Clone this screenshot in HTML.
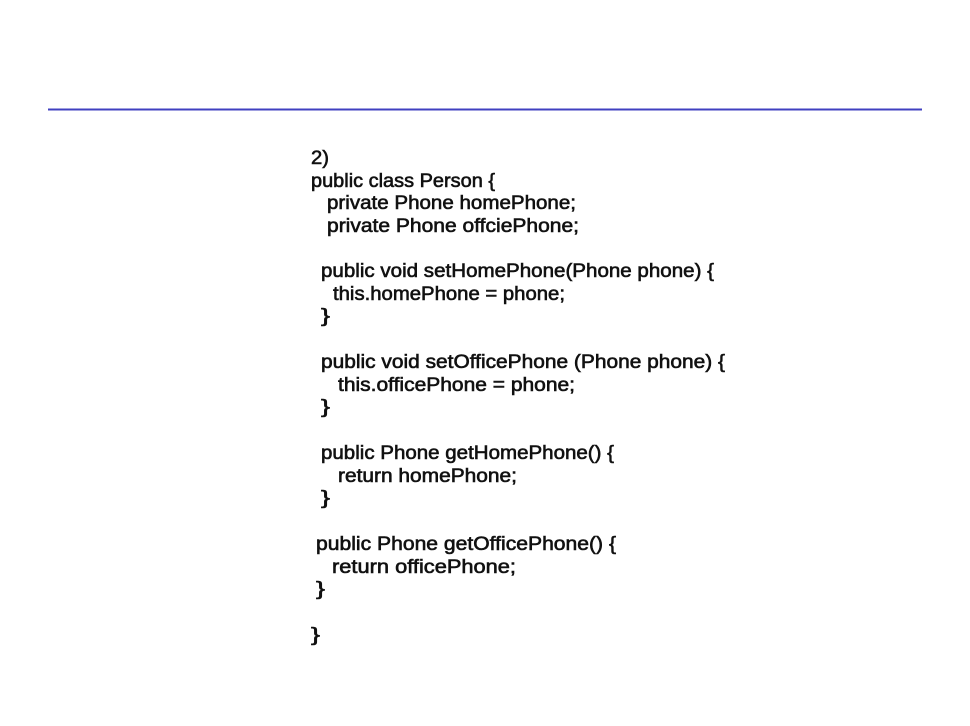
<!DOCTYPE html>
<html><head><meta charset="utf-8"><style>
html,body{margin:0;padding:0;background:#fff;width:970px;height:726px;overflow:hidden}
svg{display:block}
text{font-family:"Liberation Sans","NanumGothic",sans-serif;font-size:19px;fill:#111;stroke:#111;stroke-width:0.6}
</style></head><body>
<svg width="970" height="726" viewBox="0 0 970 726">
<rect x="48" y="108.5" width="874" height="2" fill="#4040c0"/>
<text x="311" y="164" textLength="18" lengthAdjust="spacingAndGlyphs">2)</text>
<text x="311" y="187" textLength="184" lengthAdjust="spacingAndGlyphs">public class Person {</text>
<text x="327" y="209" textLength="249" lengthAdjust="spacingAndGlyphs">private Phone homePhone;</text>
<text x="327" y="232" textLength="252" lengthAdjust="spacingAndGlyphs">private Phone offciePhone;</text>
<text x="321" y="277" textLength="393" lengthAdjust="spacingAndGlyphs">public void setHomePhone(Phone phone) {</text>
<text x="333" y="300" textLength="232" lengthAdjust="spacingAndGlyphs">this.homePhone = phone;</text>
<text x="321" y="322" textLength="9" lengthAdjust="spacingAndGlyphs">}</text>
<text x="321" y="368" textLength="404" lengthAdjust="spacingAndGlyphs">public void setOfficePhone (Phone phone) {</text>
<text x="338" y="391" textLength="237" lengthAdjust="spacingAndGlyphs">this.officePhone = phone;</text>
<text x="321" y="413" textLength="9" lengthAdjust="spacingAndGlyphs">}</text>
<text x="321" y="459" textLength="293" lengthAdjust="spacingAndGlyphs">public Phone getHomePhone() {</text>
<text x="338" y="482" textLength="179" lengthAdjust="spacingAndGlyphs">return homePhone;</text>
<text x="321" y="504" textLength="9" lengthAdjust="spacingAndGlyphs">}</text>
<text x="316" y="550" textLength="300" lengthAdjust="spacingAndGlyphs">public Phone getOfficePhone() {</text>
<text x="332" y="573" textLength="184" lengthAdjust="spacingAndGlyphs">return officePhone;</text>
<text x="316" y="595" textLength="9" lengthAdjust="spacingAndGlyphs">}</text>
<text x="311" y="641" textLength="9" lengthAdjust="spacingAndGlyphs">}</text>
</svg>
</body></html>
